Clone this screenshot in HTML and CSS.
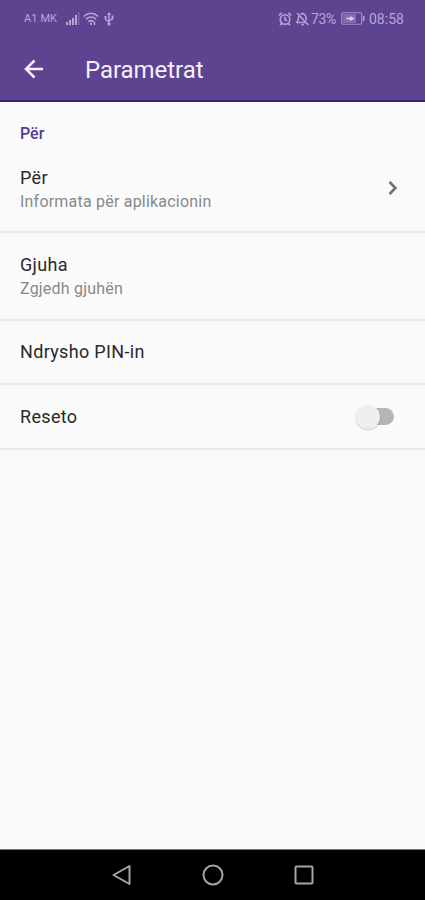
FILE: index.html
```
<!DOCTYPE html>
<html lang="sq">
<head>
<meta charset="utf-8">
<title>Parametrat</title>
<link rel="stylesheet" href="styles.css">
</head>
<body>
<div class="screen">
  <div class="status">
    <span class="carrier">A1 MK</span>
    <svg class="signal" width="14" height="13" viewBox="0 0 14 13" fill="currentColor"><path d="M0 10h2v3H0zM3 8h2v5H3zM6 6h2v7H6zM9 3h2v10H9z"/><path d="M12 0h1.500v13H12z" opacity=".35"/></svg>
    <svg class="wifi" width="16" height="14" viewBox="0 0 16 14" fill="none" stroke="currentColor" stroke-width="1.600"><path d="M.7 4.500Q8-2 15.300 4.500M3 7.200Q8 2.800 13 7.200M5.400 9.700Q8 7.400 10.600 9.700"/><path d="M8 13V10.500M11.500 13V9.500"/></svg>
    <svg class="usb" width="10" height="14" viewBox="0 0 10 14" fill="none" stroke="currentColor" stroke-width="1.400"><path d="M5 12V2M5 10L1.500 7.500V5M5 8.500L8.500 7V4.500"/><path d="M5 0l2 3H3zM.5 4h2v2h-2zM7.500 3.500h2v2h-2z" fill="currentColor" stroke="none"/><circle cx="5" cy="12" r="1.600" fill="currentColor" stroke="none"/></svg>
    <span class="gap"></span>
    <svg class="alarm" width="14" height="14" viewBox="0 0 14 14" fill="none" stroke="currentColor" stroke-width="1.600"><circle cx="7" cy="7.500" r="4.800"/><path d="M7 4.700v3l2 1.200M.8 3.300L3.700.9M13.200 3.300L10.300.9M3.500 11.500L2 13.300M10.500 11.500L12 13.300"/></svg>
    <svg class="mute" width="13" height="14" viewBox="0 0 13 14" fill="none" stroke="currentColor" stroke-width="1.500"><path d="M1 1l11.300 12M2.800 4Q2.500 8 1 10.500h8.500M4.500 2.500Q6.500.8 8.500 2.500Q10.300 4 10.300 8.500M5.300 12.700h2.400"/></svg>
    <span class="percent">73%</span>
    <svg class="battery" width="24" height="13" viewBox="0 0 24 13" fill="none" stroke="currentColor"><rect x=".7" y=".7" width="20" height="11.600" rx="1.500" stroke-width="1.100" opacity=".8"/><path d="M2 2h13v9H2z" fill="currentColor" stroke="none" opacity=".4"/><path d="M5 6l4-.5V4l5 2.500-5 2.500V7.500L5 7z" fill="#d8cdec" stroke="none"/><path d="M22.700 4v5" stroke-width="1.500"/></svg>
    <span class="clock">08:58</span>
  </div>
  <header class="appbar">
    <svg class="back" width="20" height="20" viewBox="0 0 20 20" fill="none" stroke="currentColor" stroke-width="2.500"><path d="M19 10H2M10.500 1.500L2 10l8.500 8.500"/></svg>
    <h1 class="title">Parametrat</h1>
  </header>
  <main class="settings">
    <h2 class="section">Për</h2>
    <div class="row row-about">
      <div class="label"><div class="name">Për</div><div class="summary">Informata për aplikacionin</div></div>
      <svg class="chevron" width="10" height="14" viewBox="0 0 10 14" fill="none" stroke="currentColor" stroke-width="2.500"><path d="M1.500 1l6 6-6 6"/></svg>
    </div>
    <div class="row row-language">
      <div class="label"><div class="name">Gjuha</div><div class="summary">Zgjedh gjuhën</div></div>
    </div>
    <div class="row row-pin"><div class="name">Ndrysho PIN-in</div></div>
    <div class="row row-reset"><div class="name">Reseto</div><div class="switch"><div class="thumb"></div></div></div>
  </main>
  <nav class="navbar">
    <svg width="20" height="22" viewBox="0 0 20 22"><path d="M17.500 2v18L1.500 11z"/></svg>
    <svg width="22" height="22" viewBox="0 0 22 22"><circle cx="11" cy="11" r="9.500"/></svg>
    <svg width="20" height="20" viewBox="0 0 20 20"><rect x="1.500" y="1.500" width="17" height="17" rx="1"/></svg>
  </nav>
</div>
</body>
</html>
```
FILE: styles.css
```
* { box-sizing: border-box; }
body { margin: 0; font-family: Roboto, sans-serif; background: #fafafa; }
.screen { width: 425px; height: 900px; display: flex; flex-direction: column; }
svg { flex: none; display: block; }
.status { height: 37px; padding: 0 20px 0 24px; display: flex; align-items: center; background: #5e4391; color: #b9a5da; white-space: nowrap; }
.carrier { width: 42px; font-size: 11px; letter-spacing: .1px; }
.wifi { margin-left: 3px; }
.usb { margin-left: 5px; }
.gap { flex: 1; }
.mute { margin-left: 4px; }
.percent { margin-left: 2px; width: 28px; font-size: 14px; letter-spacing: -.4px; }
.battery { margin-left: 2px; }
.clock { margin-left: 4px; width: 36px; font-size: 14px; }
.appbar { height: 65px; padding-left: 24px; display: flex; align-items: center; background: #5e4391; border-bottom: 2px solid #3f1c78; color: #f4effb; }
.title { margin: 2px 0 0 41px; font-size: 24px; line-height: 30px; font-weight: 400; letter-spacing: -.05px; }
.settings { flex: 1; display: flex; flex-direction: column; }
.section { margin: 0; padding: 22px 20px 0; height: 44px; font-size: 16px; line-height: 20px; font-weight: 500; color: #543c8b; }
.row { display: flex; justify-content: space-between; align-items: center; padding: 0 30px 0 20px; border-bottom: 2px solid #e9e9e9; }
.row-about { height: 87px; }
.row-language { height: 88px; }
.row-pin { height: 64px; }
.row-reset { height: 65px; }
.label { padding-top: 2px; }
.name { font-size: 18px; line-height: 24px; letter-spacing: .33px; color: #292929; }
.summary { font-size: 16px; line-height: 24px; letter-spacing: .21px; color: #898989; }
.chevron { margin: 0 -3px 2px 0; color: #707070; }
.switch { position: relative; width: 32px; height: 17px; border-radius: 9px; background: #b5b5b5; margin-right: 1px; }
.thumb { position: absolute; left: -6px; top: -3px; width: 24px; height: 24px; border-radius: 50%; background: #efefef; box-shadow: 0 1px 2px rgba(0,0,0,.2); }
.navbar { height: 51px; padding: 0 111px 0 112px; display: flex; align-items: center; justify-content: space-between; background: #000; border-top: 1px solid #777; }
.navbar svg { fill: none; stroke: #a6a6a6; stroke-width: 2; stroke-linejoin: round; }
```
